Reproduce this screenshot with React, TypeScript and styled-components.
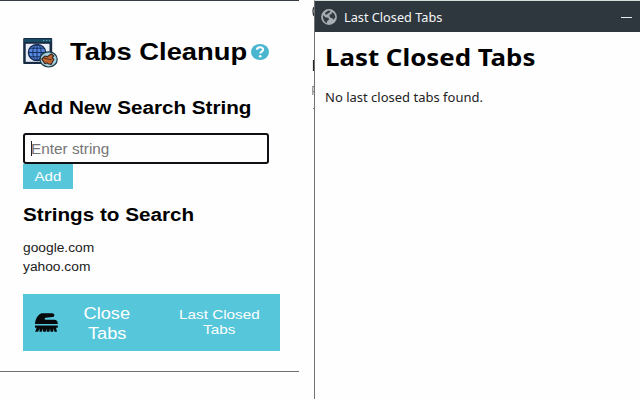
import React from "react";
import styled, { createGlobalStyle } from "styled-components";

const GlobalStyle = createGlobalStyle`
  * { box-sizing: border-box; }
  body { margin: 0; background: #fefefe; overflow: hidden; }
`;

const Screen = styled.div`
  display: grid;
  grid-template-columns: 299px 13px 2px 326px;
  width: 640px;
  height: 400px;
  color: #000;
  font-family: "Liberation Sans", Arial, sans-serif;
`;

const Popup = styled.main`
  height: 372px;
  padding: 0 19px 0 23px;
  border-top: 1px solid #363c44;
  border-bottom: 1px solid #707070;
  background: #fefefe;
`;

/* Text drawn wider than its natural proportions. */
const Wide = styled.span<{ $x?: number }>`
  display: inline-block;
  white-space: nowrap;
  transform: scaleX(${(p) => p.$x ?? 1.12});
  transform-origin: left center;
`;

const WideCentered = styled(Wide)`
  transform-origin: center;
`;

const Brand = styled.header`
  display: flex;
  height: 88px;
  padding-top: 35px;
`;

const BrandTitle = styled.h1`
  width: 181px;
  margin: 2px 0 0 12px;
  font-size: 24.5px;
  line-height: 28px;
`;

const BrandIcon = styled.svg`
  width: 35px;
  height: 31px;
  margin-top: 1px;
`;

const HelpIcon = styled.svg`
  width: 18px;
  height: 16px;
  margin-top: 8px;
`;

const SectionTitle = styled.h2<{ $top: number }>`
  margin: 0;
  height: 32px;
  font-size: 18px;
  line-height: 24px;
  padding-top: ${(p) => p.$top}px;
`;

const Field = styled.div`
  display: flex;
  align-items: center;
  width: 246px;
  height: 31px;
  margin-top: 12px;
  padding-left: 6px;
  border: 2px solid #101014;
  border-radius: 3px;
  color: #757575;
  font-size: 14.2px;
`;

const Caret = styled.i`
  width: 1px;
  height: 15px;
  margin-right: -1px;
  background: #222;
`;

const AddButton = styled.button`
  display: flex;
  align-items: center;
  justify-content: center;
  width: 50px;
  height: 25px;
  margin: 0 0 9px;
  padding: 0;
  border: 0;
  background: #56c6da;
  color: #fff;
  font: 13.4px "Liberation Sans", Arial, sans-serif;
`;

const StringList = styled.ul`
  height: 64px;
  margin: 0;
  padding: 9px 0 0;
  list-style: none;
  color: #222;
  font-size: 12.3px;
  line-height: 19px;
`;

const Actions = styled.div`
  display: flex;
  width: 257px;
  height: 57px;
  background: #56c6da;
  color: #fff;
  text-align: center;
`;

const BrushIcon = styled.svg`
  width: 25px;
  height: 21px;
  margin: 18px 0 0 11px;
`;

const ActionLabel = styled.div<{ $size: number; $leading: number; $width: number; $left: number; $top: number }>`
  display: flex;
  flex-direction: column;
  align-items: center;
  width: ${(p) => p.$width}px;
  margin: ${(p) => p.$top}px 0 0 ${(p) => p.$left}px;
  font-size: ${(p) => p.$size}px;
  line-height: ${(p) => p.$leading}px;
`;

/* Sliver of the page that shows behind the second window. */
const Behind = styled.svg`
  grid-column: 3;
  width: 2px;
  height: 120px;
`;

const Window = styled.section`
  height: 399px;
  border-top: 1px solid #d5dddb;
  border-left: 1px solid #707274;
  background: #fefefe;
  font-family: "Noto Sans", "Open Sans", sans-serif;
`;

const TitleBar = styled.div`
  display: flex;
  align-items: center;
  height: 31px;
  padding: 1px 8px 0 6px;
  background: #2f373e;
  color: #f4f6f7;
  font-size: 12px;
`;

const GlobeIcon = styled.svg`
  width: 16px;
  height: 16px;
`;

const TitleText = styled.div`
  flex: 1;
  padding-left: 7px;
`;

const Minimize = styled.i`
  width: 11px;
  height: 1px;
  background: #e6eaec;
`;

const WindowBody = styled.div`
  padding: 9px 0 0 10px;
`;

const WindowHeading = styled.h1`
  margin: 0;
  font-size: 23.5px;
  line-height: 33px;
`;

const Message = styled.p`
  margin: 14px 0 0;
  color: #222;
  font-size: 12.5px;
  line-height: 20px;
`;

function AppLogo() {
  return (
    <BrandIcon viewBox="0 0 35 31">
      <rect x="0.2" y="1" width="29" height="26" rx="1" fill="#192b43" />
      <rect x="1" y="2" width="27.4" height="3" fill="#174b64" />
      <path d="M20 3.5h1.4M23 3.5h1.4M26 3.5h1" stroke="#61a6b9" />
      <rect x="2.7" y="6.8" width="23.8" height="18" fill="#e8effb" />
      <ellipse cx="14" cy="15.5" rx="8.6" ry="8" fill="#5688df" stroke="#14264c" strokeWidth="1.3" />
      <path d="M14 7.5v16M5.5 15.5h17M7 11.2h14M7 19.8h14" stroke="#172e60" strokeWidth="1" />
      <ellipse cx="14" cy="15.5" rx="4.2" ry="8" fill="none" stroke="#172e60" />
      <ellipse cx="25.6" cy="22.4" rx="8.6" ry="7.6" fill="#a3d0db" stroke="#1a3543" strokeWidth="1.2" />
      <path d="M18.8 22l3-3 2.5.6 4-2.6 2.4 1.8-1.4 2.2 1.5 1.4-2.6 5-3-.6-1.5-1-1.7 1z" fill="#c0652d" stroke="#38251e" strokeWidth="1.1" />
      <path d="M21 21.2l7.6 1.6" stroke="#4c2b1e" strokeWidth="0.9" />
    </BrandIcon>
  );
}

export default function App() {
  return (
    <>
      <GlobalStyle />
      <Screen>
        <Popup>
          <Brand>
            <AppLogo />
            <BrandTitle><Wide $x={1.115}>Tabs Cleanup</Wide></BrandTitle>
            <HelpIcon viewBox="0 0 18 16">
              <ellipse cx="9" cy="8" rx="9" ry="8" fill="#4ab5cf" />
              <path d="M5.9 5.8C6 2.6 12.2 2.5 12.2 5.6c0 2.1-2.9 2-2.9 4" fill="none" stroke="#fff" strokeWidth="2" />
              <ellipse cx="9.2" cy="12.2" rx="1.3" ry="1.2" fill="#fff" />
            </HelpIcon>
          </Brand>
          <SectionTitle $top={7}><Wide $x={1.148}>Add New Search String</Wide></SectionTitle>
          <Field><Caret /><Wide $x={1.08}>Enter string</Wide></Field>
          <AddButton><WideCentered>Add</WideCentered></AddButton>
          <SectionTitle $top={5}><Wide $x={1.148}>Strings to Search</Wide></SectionTitle>
          <StringList>
            <li><Wide>google.com</Wide></li>
            <li><Wide>yahoo.com</Wide></li>
          </StringList>
          <Actions>
            <BrushIcon viewBox="0 0 25 21">
              <path d="M1 12C1 8.5 3 3 7.5 1.2H18c3 0 3.2 3.6.4 3.9l-7 .6c-1.2.5-1 2.1.4 2.1H20c2.5 0 3.8 1.4 3.8 4.2z" fill="#06090b" />
              <path d="M1 13.6h22.8v2.2H22l1 4h-2.4l-1.2-3.4-.2 3.4h-2.6l-.6-3.4-.6 3.4h-2.6l-.4-3.4-.6 3.4H9.2l-.3-3.4-1.1 3.4H5.4l.3-3.4-1.8 3.4H1.2l1.4-4H1z" fill="#06090b" />
            </BrushIcon>
            <ActionLabel $size={16.3} $leading={20} $width={50} $left={23} $top={9}>
              <WideCentered>Close</WideCentered>
              <WideCentered>Tabs</WideCentered>
            </ActionLabel>
            <ActionLabel $size={13.4} $leading={15} $width={80} $left={47} $top={13}>
              <WideCentered $x={1.14}>Last Closed</WideCentered>
              <WideCentered $x={1.14}>Tabs</WideCentered>
            </ActionLabel>
          </Actions>
        </Popup>
        <Behind viewBox="0 0 2 120">
          <path d="M2 7Q0 11 2 16M1.5 60v11" fill="none" stroke="#202427" strokeWidth="1.2" />
          <path d="M.8 86v9M1 86.5h1M1 91.5h1M1 108.5h1" stroke="#777" />
        </Behind>
        <Window>
          <TitleBar>
            <GlobeIcon viewBox="0 0 16 16">
              <circle cx="8" cy="8" r="7.9" fill="#a9afb3" />
              <path d="M2 6l2.4 2.2 3 .5.6 2-1.8 1.4-.3 2C3.3 13.2 1.5 10 2 6zM7 1.8l2.5-.3-.7 2-2 1.2L5 6 3.8 4zM11 3l2.3 1.7L14.4 8l-1.8 2.8-1.4-1.5-2.3-.8L8.3 6l2-1z" fill="#343d44" />
            </GlobeIcon>
            <TitleText><Wide $x={1.06}>Last Closed Tabs</Wide></TitleText>
            <Minimize />
          </TitleBar>
          <WindowBody>
            <WindowHeading><Wide $x={1.1}>Last Closed Tabs</Wide></WindowHeading>
            <Message><Wide $x={1.04}>No last closed tabs found.</Wide></Message>
          </WindowBody>
        </Window>
      </Screen>
    </>
  );
}
